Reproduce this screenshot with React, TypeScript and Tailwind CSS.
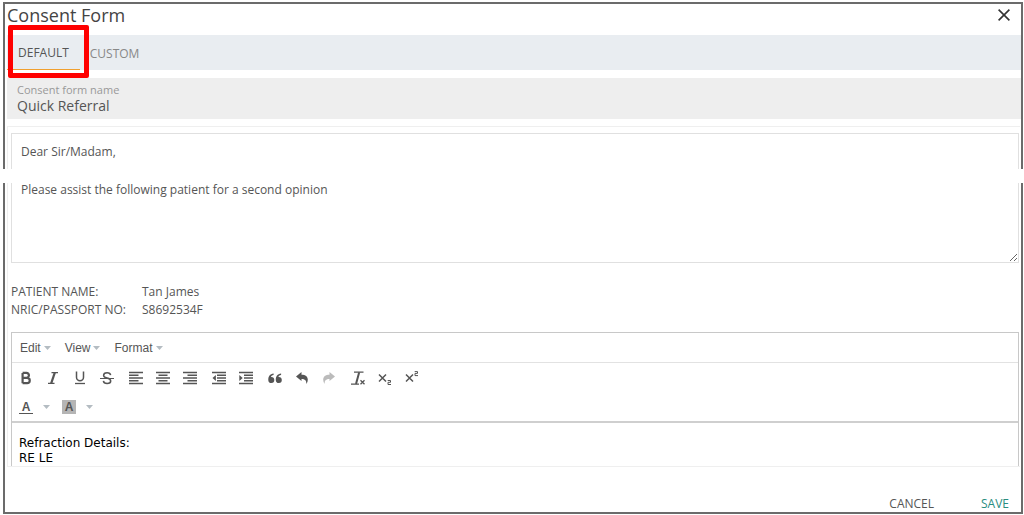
import type { ReactNode } from "react";

const menus = ["Edit", "View", "Format"];

function Caret() {
  return (
    <svg className="h-1 w-[7px] shrink-0" viewBox="0 0 7 4" fill="#b4bcc2">
      <path d="M0 0h7L3.5 4z" />
    </svg>
  );
}

function Icon({ children }: { children: ReactNode }) {
  return (
    <svg
      className="h-3.5 w-3.5"
      viewBox="0 0 14 14"
      fill="none"
      stroke="currentColor"
      strokeWidth="1.5"
    >
      {children}
    </svg>
  );
}

const groups: { label: string; muted?: boolean; icon: ReactNode }[][] = [
  [
    {
      label: "Bold",
      icon: (
        <path
          strokeWidth="2.2"
          d="M3.6 1.900v10.400M3.6 1.900h3.900a2.400 2.400 0 0 1 0 4.900H3.600M3.600 6.900h4.500a2.600 2.600 0 0 1 0 5.300H3.600"
        />
      ),
    },
    {
      label: "Italic",
      icon: (
        <>
          <path strokeWidth="1.2" d="M5.5 1.6h6.5M2 12.4h6.5" />
          <path strokeWidth="2.200" d="M8.8 1.6L5.2 12.4" />
        </>
      ),
    },
    {
      label: "Underline",
      icon: (
        <>
          <path d="M3.5 .5v5.800a3.5 3.5 0 0 0 7 0V.5" />
          <path strokeWidth="1.3" d="M2 12.500h10" />
        </>
      ),
    },
    {
      label: "Strikethrough",
      icon: (
        <>
          <path d="M10.6 4.2C10.4 2.6 9 1.8 7.1 1.8 5 1.8 3.6 2.8 3.6 4.4c0 1.700 1.600 2.200 3.500 2.700 2 .5 3.600 1 3.600 2.800 0 1.600-1.500 2.500-3.600 2.500-2.100 0-3.500-.9-3.700-2.600" />
          <path strokeWidth="1" d="M0 7.500h14" />
        </>
      ),
    },
  ],
  [
    {
      label: "Align left",
      icon: <path strokeWidth="1.700" d="M0 1.500h14M0 4.250h9.500M0 7h14M0 9.750h9.500M0 12.500h14" />,
    },
    {
      label: "Align center",
      icon: <path strokeWidth="1.700" d="M0 1.500h14M2.500 4.250h9M0 7h14M2.500 9.750h9M0 12.500h14" />,
    },
    {
      label: "Align right",
      icon: <path strokeWidth="1.700" d="M0 1.500h14M4.500 4.250h9.500M0 7h14M4.500 9.750h9.500M0 12.500h14" />,
    },
  ],
  [
    {
      label: "Decrease indent",
      icon: (
        <>
          <path strokeWidth="1.700" d="M0 1.500h14M5 4.250h9M5 7h9M5 9.750h9M0 12.500h14" />
          <path d="M3.900 4v6L.5 7z" fill="currentColor" stroke="none" />
        </>
      ),
    },
    {
      label: "Increase indent",
      icon: (
        <>
          <path strokeWidth="1.700" d="M0 1.500h14M5 4.250h9M5 7h9M5 9.750h9M0 12.500h14" />
          <path d="M.3 4v6L3.700 7z" fill="currentColor" stroke="none" />
        </>
      ),
    },
  ],
  [
    {
      label: "Blockquote",
      icon: (
        <g fill="currentColor" stroke="none">
          <path d="M3.300 6a3 3 0 1 1-3 3.200C.1 5.500 2 3 5.600 2.600v1.500C3.900 4.500 3.200 5.100 2.900 6z" />
          <path d="M10.800 6a3 3 0 1 1-3 3.200C7.600 5.500 9.500 3 13.100 2.600v1.500c-1.700.4-2.400 1-2.700 1.900z" />
        </g>
      ),
    },
    {
      label: "Undo",
      icon: (
        <path
          fill="currentColor"
          stroke="none"
          d="M1 5.500L6.500 1v2.800c4 0 6.300 1.900 6.300 5 0 1.500-.5 2.900-1.500 4.200.3-3.600-1.300-5-4.800-5V10z"
        />
      ),
    },
    {
      label: "Redo",
      muted: true,
      icon: (
        <path
          fill="currentColor"
          stroke="none"
          d="M13 5.500L7.500 1v2.800c-4 0-6.300 1.900-6.300 5 0 1.500.5 2.900 1.500 4.200-.3-3.600 1.300-5 4.800-5V10z"
        />
      ),
    },
  ],
  [
    {
      label: "Clear formatting",
      icon: (
        <>
          <path strokeWidth="1.300" d="M3 1.200h9.500M0 13.200h8M9.500 9.300l4 4M13.500 9.300l-4 4" />
          <path strokeWidth="2" d="M8.200 1.200L5 13" />
        </>
      ),
    },
    {
      label: "Subscript",
      icon: (
        <>
          <path d="M1 3.500l7 7M8 3.500l-7 7" />
          <path strokeWidth="1" d="M9.700 9.500h2.800v1.800H10v2.200h3" />
        </>
      ),
    },
    {
      label: "Superscript",
      icon: (
        <>
          <path d="M1 3.500l7 7M8 3.500l-7 7" />
          <path strokeWidth="1" d="M9.700.600h2.800v1.800H10v2.200h3" />
        </>
      ),
    },
  ],
];

function Editor() {
  return (
    <div className="mt-[13px] border border-[#c8c8c8] font-['Liberation_Sans',sans-serif] text-[#555]">
      <div className="flex h-[30px] items-center gap-3.5 border-b border-[#e2e2e2] pl-2 text-xs">
        {menus.map((menu) => (
          <button key={menu} className="flex items-center gap-[3px]">
            {menu}
            <Caret />
          </button>
        ))}
      </div>
      <div className="border-b-2 border-[#cfcfcf]">
        <div className="flex h-[30px] items-center gap-0.5">
          {groups.map((group, i) => (
            <div key={i} className="flex">
              {group.map((tool) => (
                <button
                  key={tool.label}
                  aria-label={tool.label}
                  className={
                    tool.muted
                      ? "flex w-[27px] justify-center text-[#bbb]"
                      : "flex w-[27px] justify-center"
                  }
                >
                  <Icon>{tool.icon}</Icon>
                </button>
              ))}
            </div>
          ))}
        </div>
        <div className="flex h-7 items-center gap-3 pl-[7px] text-xs font-bold">
          <button aria-label="Text color" className="flex items-center gap-2.5">
            <span className="h-3.5 w-3.5 border-b border-[#555] text-center leading-3.5">A</span>
            <Caret />
          </button>
          <button aria-label="Background color" className="flex items-center gap-2.5">
            <span className="h-3.5 w-3.5 bg-[#b5b5b5] text-center leading-3.5">A</span>
            <Caret />
          </button>
        </div>
      </div>
      <div className="h-40 px-[7px] pt-[13px] font-['DejaVu_Sans',sans-serif] text-xs leading-[15px] text-black">
        <p>Refraction Details:</p>
        <p>RE LE</p>
      </div>
    </div>
  );
}

export default function App() {
  return (
    <div className="relative h-screen bg-white pt-0.5 pr-px pb-px pl-[3px] font-['Open_Sans',sans-serif] text-xs text-[#555]">
      <div className="flex h-full flex-col border-2 border-[#6b6b6b] pl-0.5">
        <header className="flex h-[31px] shrink-0 items-center justify-between pr-[11px] pb-2.5">
          <h1 className="text-lg leading-5 text-[#444]">Consent Form</h1>
          <button aria-label="Close">
            <svg className="h-3 w-3" viewBox="0 0 12 12" stroke="#333" strokeWidth="1.6">
              <path d="M.6.6l10.800 10.800M11.400.6L.6 11.400" />
            </svg>
          </button>
        </header>

        <nav className="flex h-[35px] shrink-0 bg-[#e9edf1]">
          <button className="border-b border-[#f0a030] px-[11px] pt-0.5">DEFAULT</button>
          <button className="px-2.5 pt-0.5 text-[#888]">CUSTOM</button>
        </nav>

        <div className="mt-2 flex h-[41px] shrink-0 flex-col bg-[#eee] px-2.5 pt-[5px]">
          <label htmlFor="form-name" className="text-[11px] leading-[14px] text-[#999]">
            Consent form name
          </label>
          <input
            id="form-name"
            defaultValue="Quick Referral"
            className="h-[18px] w-full bg-transparent text-sm leading-[18px] outline-none"
          />
        </div>

        <main className="mt-[7px] mr-px min-h-0 flex-1 overflow-hidden border border-r-0 border-[#efefef] pt-1.5 pr-px pl-[3px]">
          <textarea
            aria-label="Message"
            className="block h-[130px] w-full border border-[#e0e0e0] px-[9px] pt-2 leading-[19px] outline-none"
            defaultValue={
              "Dear Sir/Madam,\n\nPlease assist the following patient for a second opinion"
            }
          />
          <dl className="mt-5 grid grid-cols-[131px_1fr] leading-[18px]">
            <dt>PATIENT NAME:</dt>
            <dd>Tan James</dd>
            <dt>NRIC/PASSPORT NO:</dt>
            <dd>S8692534F</dd>
          </dl>
          <Editor />
        </main>

        <footer className="flex h-[45px] shrink-0 items-end justify-end gap-[47px] pr-3">
          <button className="h-4 leading-4">CANCEL</button>
          <button className="h-4 leading-4 text-[#2a8d7f]">SAVE</button>
        </footer>
      </div>

      {/* torn section of the form */}
      <div className="absolute inset-x-0 top-[169px] h-3.5 bg-white" />
      {/* highlight around the active tab */}
      <div className="pointer-events-none absolute top-[25px] left-2 h-[53px] w-[81px] rounded-xs border-5 border-[#f00]" />
    </div>
  );
}
